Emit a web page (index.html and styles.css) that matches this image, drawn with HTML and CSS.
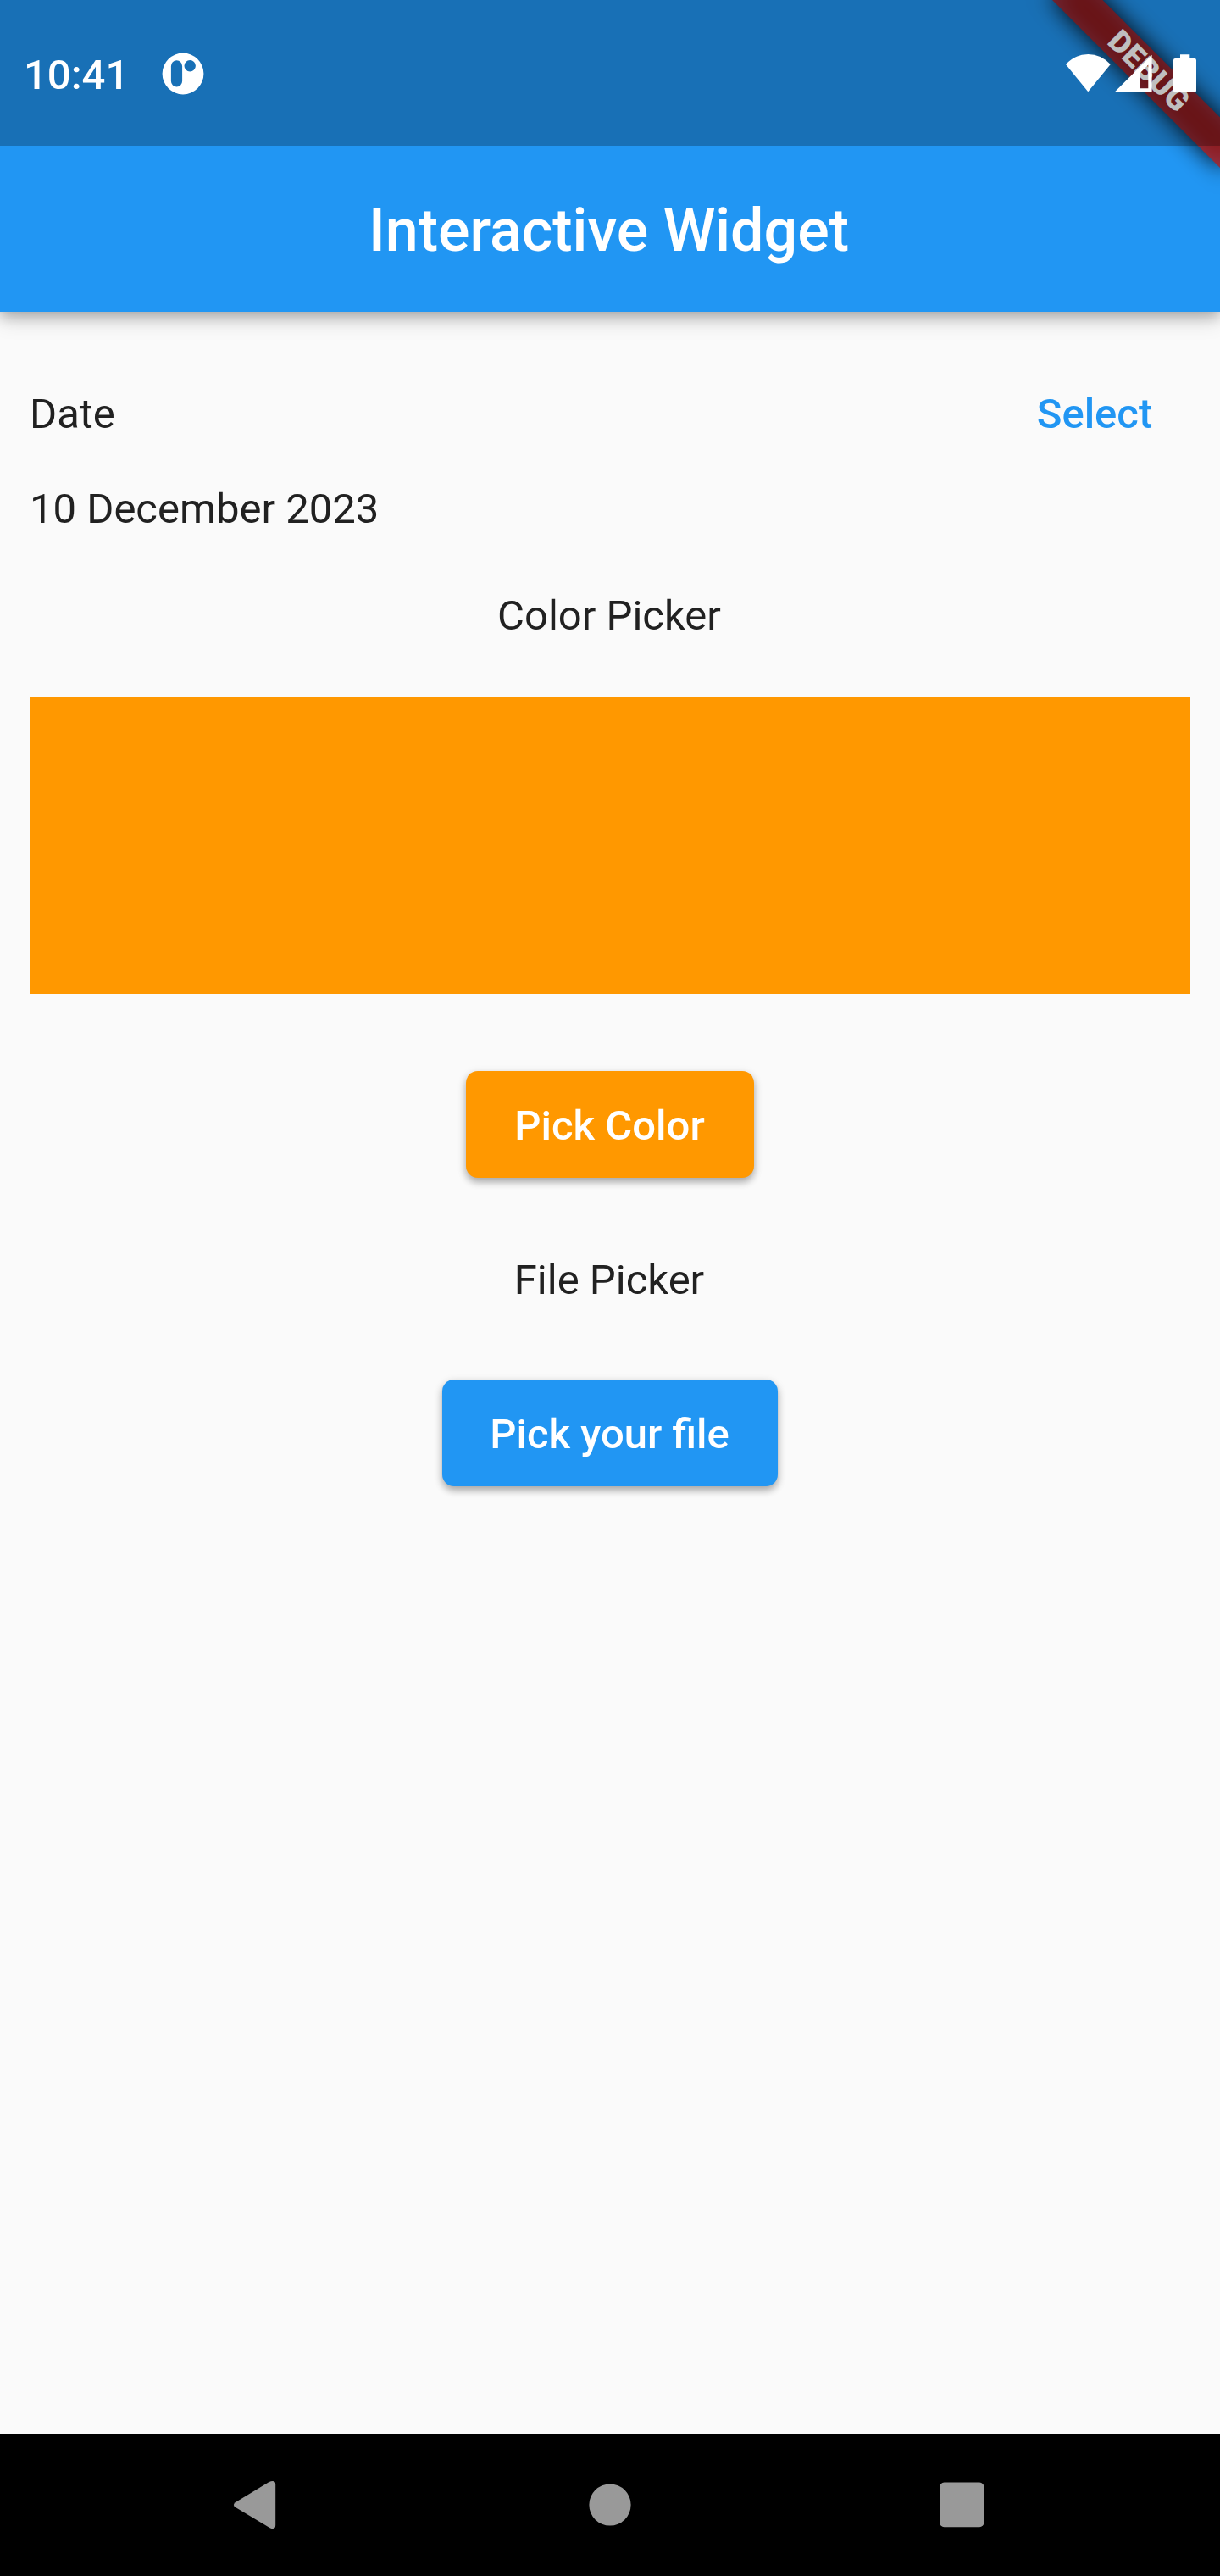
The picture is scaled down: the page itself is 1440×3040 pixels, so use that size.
FILE: index.html
```html
<!DOCTYPE html>
<html lang="en">
<head>
<meta charset="utf-8">
<title>Interactive Widget</title>
<link rel="stylesheet" href="styles.css">
</head>
<body>
<div class="screen">
  <div class="banner" aria-hidden="true"><span class="banner-text">DEBUG</span></div>
  <div class="status-bar">
    <span class="clock">10:41</span>
    <svg class="notification" viewBox="0 0 50 50" width="50" height="50">
      <path fill="#fff" fill-rule="evenodd" d="M25 .6a24.4 24.4 0 1 0 0 48.8a24.4 24.4 0 1 0 0-48.8zM17.5 9.3a6.6 6.6 0 0 1 6.6 6.6v17.9a6.6 6.6 0 0 1-13.2 0V15.9a6.6 6.6 0 0 1 6.6-6.6zM33.2 9.1a6.7 6.7 0 1 1 0 13.4a6.7 6.7 0 1 1 0-13.4z"/>
    </svg>
    <svg class="system-icons" viewBox="0 0 156 48" width="156" height="48" fill="#fff">
      <path d="M0 13Q11 1 26.3 1T52.7 13L26.3 45.3z"/>
      <path fill-rule="evenodd" d="M57.5 45.7L101.6 1.7V45.7zM88 22.8V41.2H97.3V13.5z"/>
      <path d="M135 1.2h11.3V6H152a2 2 0 0 1 2 2v36a2 2 0 0 1-2 2h-23a2 2 0 0 1-2-2V8a2 2 0 0 1 2-2h6z"/>
    </svg>
  </div>
  <header class="app-bar"><h1 class="title">Interactive Widget</h1></header>
  <main class="content">
    <div class="date-row">
      <span class="label">Date</span>
      <button class="text-button">Select</button>
    </div>
    <p class="label">10 December 2023</p>
    <p class="label centered">Color Picker</p>
    <div class="swatch"></div>
    <button class="button button-orange">Pick Color</button>
    <p class="label centered">File Picker</p>
    <button class="button button-blue">Pick your file</button>
  </main>
  <nav class="nav-bar">
    <svg viewBox="0 0 60 60" width="60" height="60"><path fill="#999" d="M2.6 27.2L42.2 3.2Q50.2 0 50.2 6V54Q50.2 60 43.6 57.2L2.6 32.8Q-.8 30 2.6 27.2z"/></svg>
    <svg viewBox="0 0 60 60" width="60" height="60"><circle cx="30" cy="30" r="24.6" fill="#999"/></svg>
    <svg viewBox="0 0 60 60" width="60" height="60"><rect x="3" y="3.6" width="52.6" height="52.6" rx="5.5" fill="#999"/></svg>
  </nav>
</div>
</body>
</html>
```

FILE: styles.css
```css
* { box-sizing: border-box; }

body {
  margin: 0;
  font-family: Roboto, sans-serif;
  color: #212121;
}

.screen {
  position: relative;
  display: flex;
  flex-direction: column;
  width: 1440px;
  height: 3040px;
  overflow: hidden;
  background: #fafafa;
}

/* Status bar */
.status-bar {
  z-index: 3;
  display: flex;
  align-items: center;
  height: 172px;
  padding: 2px 26px 0 28px;
  background: rgba(0, 0, 0, 0.25);
}

.clock {
  padding-top: 2px;
  color: #fff;
  font-size: 49px;
  font-weight: 500;
}

.notification { margin-left: 39px; }
.system-icons { margin-left: auto; }

/* App bar, extended behind the status bar */
.app-bar {
  z-index: 1;
  display: flex;
  align-items: center;
  justify-content: center;
  height: 368px;
  margin-top: -172px;
  padding: 175px 3px 0 0;
  background: #2196f3;
  box-shadow: 0 6px 14px rgba(0, 0, 0, 0.2), 0 8px 24px rgba(0, 0, 0, 0.18);
}

.title {
  margin: 0;
  color: #fff;
  font-size: 70px;
  font-weight: 500;
}

/* Corner banner */
.banner {
  position: absolute;
  z-index: 2;
  top: 0;
  left: 1440px;
  width: 0;
  height: 0;
  transform: rotate(45deg);
}

.banner::before,
.banner-text {
  position: absolute;
  top: 98px;
  left: -140px;
  width: 280px;
  height: 42px;
}

.banner::before {
  content: "";
  background: rgba(0, 0, 0, 0.92);
  filter: blur(13.9px);
}

.banner-text {
  background: rgba(183, 28, 28, 0.76);
  color: #fff;
  font-size: 36.5px;
  font-weight: 900;
  line-height: 42px;
  letter-spacing: 0.3px;
  text-align: center;
}

/* Content */
.content {
  z-index: 0;
  display: flex;
  flex: 1;
  flex-direction: column;
  padding: 35px;
}

.label {
  margin: 0;
  padding-top: 4px;
  font-size: 49px;
  line-height: 52px;
}

.centered {
  margin: 70px 2px 70px 0;
  text-align: center;
}

.date-row {
  display: flex;
  align-items: center;
  justify-content: space-between;
  height: 168px;
}

.text-button,
.button {
  height: 126px;
  border: 0;
  font: 500 49px Roboto, sans-serif;
}

.text-button {
  min-width: 224px;
  padding: 2px 30px 0 28px;
  background: none;
  color: #2196f3;
}

.swatch {
  height: 350px;
  margin-bottom: 91px;
  background: #ff9800;
}

.button {
  align-self: center;
  padding: 2px 54px 0 53px;
  border-radius: 14px;
  color: #fff;
  box-shadow: 0 5px 8px rgba(0, 0, 0, 0.26), 0 3px 12px rgba(0, 0, 0, 0.12);
}

.button-orange { width: 340px; margin-bottom: 21px; background: #ff9800; }
.button-blue { width: 396px; margin-top: 21px; background: #2196f3; }

/* Navigation bar */
.nav-bar {
  z-index: 1;
  display: grid;
  grid-template-columns: repeat(3, 415.5px);
  place-content: center;
  place-items: center;
  height: 168px;
  background: #000;
}
```
